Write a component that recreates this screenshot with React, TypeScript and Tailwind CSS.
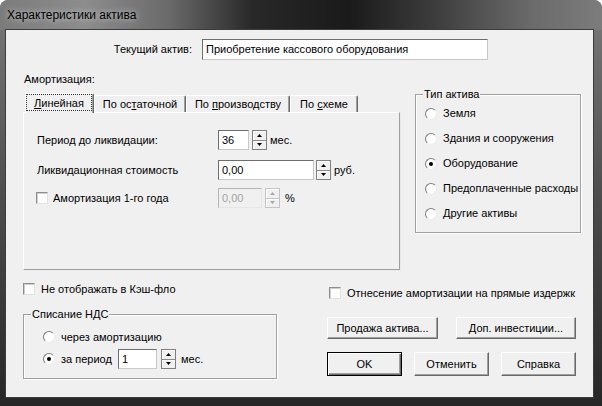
import React from 'react';

type Kids = { children?: React.ReactNode };

const CheckBox: React.FC = () => (
  <span className="block w-[12px] h-[12px] shrink-0 bg-white border border-t-[#8e8e8e] border-l-[#8e8e8e] border-r-[#e2e2e2] border-b-[#e2e2e2] shadow-[inset_1px_1px_0_#cfcfcf]" />
);

const Radio: React.FC<{ checked?: boolean }> = ({ checked }) => (
  <span className="flex items-center justify-center w-[12px] h-[12px] shrink-0 rounded-full bg-white border border-t-[#7d7d7d] border-l-[#7d7d7d] border-r-[#ececec] border-b-[#ececec]">
    {checked && <span className="block w-[4px] h-[4px] rounded-full bg-black" />}
  </span>
);

const Arrow: React.FC<{ down?: boolean; disabled?: boolean }> = ({ down, disabled }) => (
  <svg width="5" height="3" viewBox="0 0 5 3">
    <path d={down ? 'M0 0H5L2.5 3Z' : 'M2.5 0L5 3H0Z'} fill={disabled ? '#a8a8a8' : '#000'} />
  </svg>
);

const Spin: React.FC<{ disabled?: boolean }> = ({ disabled }) => (
  <div
    className={`flex flex-col w-[15px] h-[20px] shrink-0 border bg-[#f0f0f0] ${
      disabled ? 'border-[#c4c4c4]' : 'border-[#7f7f7f]'
    }`}
  >
    <div
      className={`flex flex-1 items-center justify-center border-b shadow-[inset_1px_1px_0_white] ${
        disabled ? 'border-[#c4c4c4]' : 'border-[#8a8a8a]'
      }`}
    >
      <Arrow disabled={disabled} />
    </div>
    <div className="flex flex-1 items-center justify-center shadow-[inset_1px_1px_0_white]">
      <Arrow down disabled={disabled} />
    </div>
  </div>
);

const Field: React.FC<{ w: string; value: string; disabled?: boolean; h?: string }> = ({ w, value, disabled, h }) => (
  <div
    className={`${w} ${h || 'h-[20px]'} shrink-0 flex items-center pl-[3px] border ${
      disabled
        ? 'bg-[#f0f0f0] text-[#a3a3a3] border-t-[#b5b5b5] border-l-[#b5b5b5] border-r-[#e6e6e6] border-b-[#e6e6e6]'
        : 'bg-white text-black border-t-[#6e6e6e] border-l-[#6e6e6e] border-r-[#c9c9c9] border-b-[#c9c9c9]'
    }`}
  >
    {value}
  </div>
);

const Btn: React.FC<Kids & { w: string; h: string; def?: boolean }> = ({ w, h, def, children }) => (
  <button
    type="button"
    className={`${w} ${h} flex items-center justify-center bg-[#f0f0f0] border ${
      def
        ? 'border-black shadow-[inset_1px_1px_0_white,inset_-1px_-1px_0_#696969,inset_-2px_-2px_0_#a0a0a0]'
        : 'border-t-white border-l-white border-r-[#696969] border-b-[#696969] shadow-[inset_-1px_-1px_0_#a0a0a0]'
    }`}
  >
    {children}
  </button>
);

const Group: React.FC<Kids & { label: string; className: string }> = ({ label, className, children }) => (
  <div className={`relative border border-[#a0a0a0] shadow-[1px_1px_0_white,inset_1px_1px_0_white] ${className}`}>
    <span className="absolute top-[-7px] left-[7px] px-[1px] bg-[#f0f0f0] leading-[13px]">{label}</span>
    {children}
  </div>
);

const Tab: React.FC<Kids & { w: string }> = ({ w, children }) => (
  <div
    className={`${w} h-[17px] flex items-center justify-center rounded-t-[2px] border-t border-l border-r border-t-white border-l-white border-r-[#696969] shadow-[inset_-1px_0_0_#a0a0a0]`}
  >
    <span className="pt-[1px]">{children}</span>
  </div>
);

export default function App() {
  return (
    <div className="w-[602px] h-[406px] flex flex-col overflow-hidden rounded-t-[8px] bg-[linear-gradient(180deg,#7a7a7a_0%,#505050_45%,#262626_100%)] font-['Liberation_Sans',Arial,sans-serif] text-[11px] leading-[13px] text-black">
      {/* заголовок окна */}
      <div className="h-[30px] shrink-0 flex items-center pl-[7px] pt-[1px] text-[12px] bg-[linear-gradient(90deg,#7b7b7b_0%,#8d8d8d_14%,#6a6a6a_28%,#282828_42%,#1a1a1a_58%,#3c3c3c_72%,#6a6a6a_88%,#7c7c7c_100%)]">
        <span className="[text-shadow:0_0_6px_rgba(255,255,255,0.75)]">Характеристики актива</span>
      </div>

      <div className="flex-1 pl-[6px] pr-[9px] pb-[9px]">
        <div className="h-full flex flex-col bg-[#f0f0f0] shadow-[0_0_0_1px_#3c3c3c]">
          {/* текущий актив */}
          <div className="flex items-center mt-[9px] h-[21px]">
            <div className="w-[186px] text-right">Текущий актив:</div>
            <div className="ml-[10px]">
              <Field w="w-[286px]" h="h-[21px]" value="Приобретение кассового оборудования" />
            </div>
          </div>

          <div className="flex">
            {/* амортизация */}
            <div className="ml-[17px] w-[377px] flex flex-col">
              <div className="mt-[13px] pl-[1px] h-[13px]">Амортизация:</div>
              <div className="mt-[7px] ml-[2px] flex items-end h-[19px]">
                <div className="relative z-10 -mb-px w-[69px] h-[20px] flex flex-col bg-[#f0f0f0] rounded-t-[2px] border-t border-l border-r border-t-white border-l-white border-r-[#696969] shadow-[inset_-1px_0_0_#a0a0a0]">
                  <span className="mr-[1px] h-[17px] flex items-center justify-center border border-dotted border-[#333] pt-[1px]">
                    <u>Л</u>инейная
                  </span>
                </div>
                <Tab w="w-[92px]">
                  По ос<u>т</u>аточной
                </Tab>
                <Tab w="w-[104px]">
                  По <u>п</u>роизводству
                </Tab>
                <Tab w="w-[68px]">
                  По <u>с</u>хеме
                </Tab>
              </div>
              <div className="h-[158px] pl-[13px] pt-[17px] border border-t-white border-l-white border-r-[#a0a0a0] border-b-[#a0a0a0] shadow-[1px_1px_0_#e8e8e8]">
                <div className="flex items-center h-[20px]">
                  <div className="w-[181px]">Период до ликвидации:</div>
                  <Field w="w-[31px]" value="36" />
                  <div className="ml-[3px]">
                    <Spin />
                  </div>
                  <span className="ml-[3px]">мес.</span>
                </div>
                <div className="flex items-center h-[20px] mt-[10px]">
                  <div className="w-[181px]">Ликвидационная стоимость</div>
                  <Field w="w-[96px]" value="0,00" />
                  <div className="ml-[2px]">
                    <Spin />
                  </div>
                  <span className="ml-[3px]">руб.</span>
                </div>
                <div className="flex items-center h-[20px] mt-[8px]">
                  <div className="w-[181px] -ml-px flex items-center gap-[5px]">
                    <CheckBox />
                    <span>Амортизация 1-го года</span>
                  </div>
                  <div className="ml-[1px]">
                    <Field w="w-[44px]" value="0,00" disabled />
                  </div>
                  <div className="ml-[3px]">
                    <Spin disabled />
                  </div>
                  <span className="ml-[5px]">%</span>
                </div>
              </div>
            </div>

            {/* тип актива */}
            <Group label="Тип актива" className="ml-[15px] mt-[34px] w-[166px] h-[139px] pt-[6px] pl-[9px]">
              {['Земля', 'Здания и сооружения', 'Оборудование', 'Предоплаченные расходы', 'Другие активы'].map((t) => (
                <div key={t} className="flex items-center gap-[6px] h-[25px]">
                  <Radio checked={t === 'Оборудование'} />
                  <span>{t}</span>
                </div>
              ))}
            </Group>
          </div>

          <div className="flex">
            <div className="w-[271px] pl-[17px] flex flex-col">
              <div className="mt-[12px] h-[14px] flex items-center gap-[6px]">
                <CheckBox />
                <span>Не отображать в Кэш-фло</span>
              </div>
              <Group label="Списание НДС" className="mt-[18px] h-[65px] pt-[11px] pl-[19px]">
                <div className="flex items-center gap-[6px] h-[22px]">
                  <Radio />
                  <span>через амортизацию</span>
                </div>
                <div className="flex items-center h-[22px]">
                  <Radio checked />
                  <span className="ml-[6px] w-[57px]">за период</span>
                  <Field w="w-[39px]" value="1" />
                  <div className="ml-[4px]">
                    <Spin />
                  </div>
                  <span className="ml-[5px]">мес.</span>
                </div>
              </Group>
            </div>

            <div className="ml-[50px] w-[249px] flex flex-col">
              <div className="mt-[16px] h-[14px] ml-[2px] flex items-center gap-[6px]">
                <CheckBox />
                <span className="whitespace-nowrap">Отнесение амортизации на прямые издержк</span>
              </div>
              <div className="mt-[17px] flex justify-between">
                <Btn w="w-[111px]" h="h-[22px]">Продажа актива...</Btn>
                <Btn w="w-[120px]" h="h-[22px]">Доп. инвестиции...</Btn>
              </div>
              <div className="mt-[13px] flex justify-between">
                <Btn w="w-[75px]" h="h-[24px]" def>
                  OK
                </Btn>
                <Btn w="w-[75px]" h="h-[24px]">Отменить</Btn>
                <Btn w="w-[75px]" h="h-[24px]">Справка</Btn>
              </div>
            </div>
          </div>
        </div>
      </div>
    </div>
  );
}
